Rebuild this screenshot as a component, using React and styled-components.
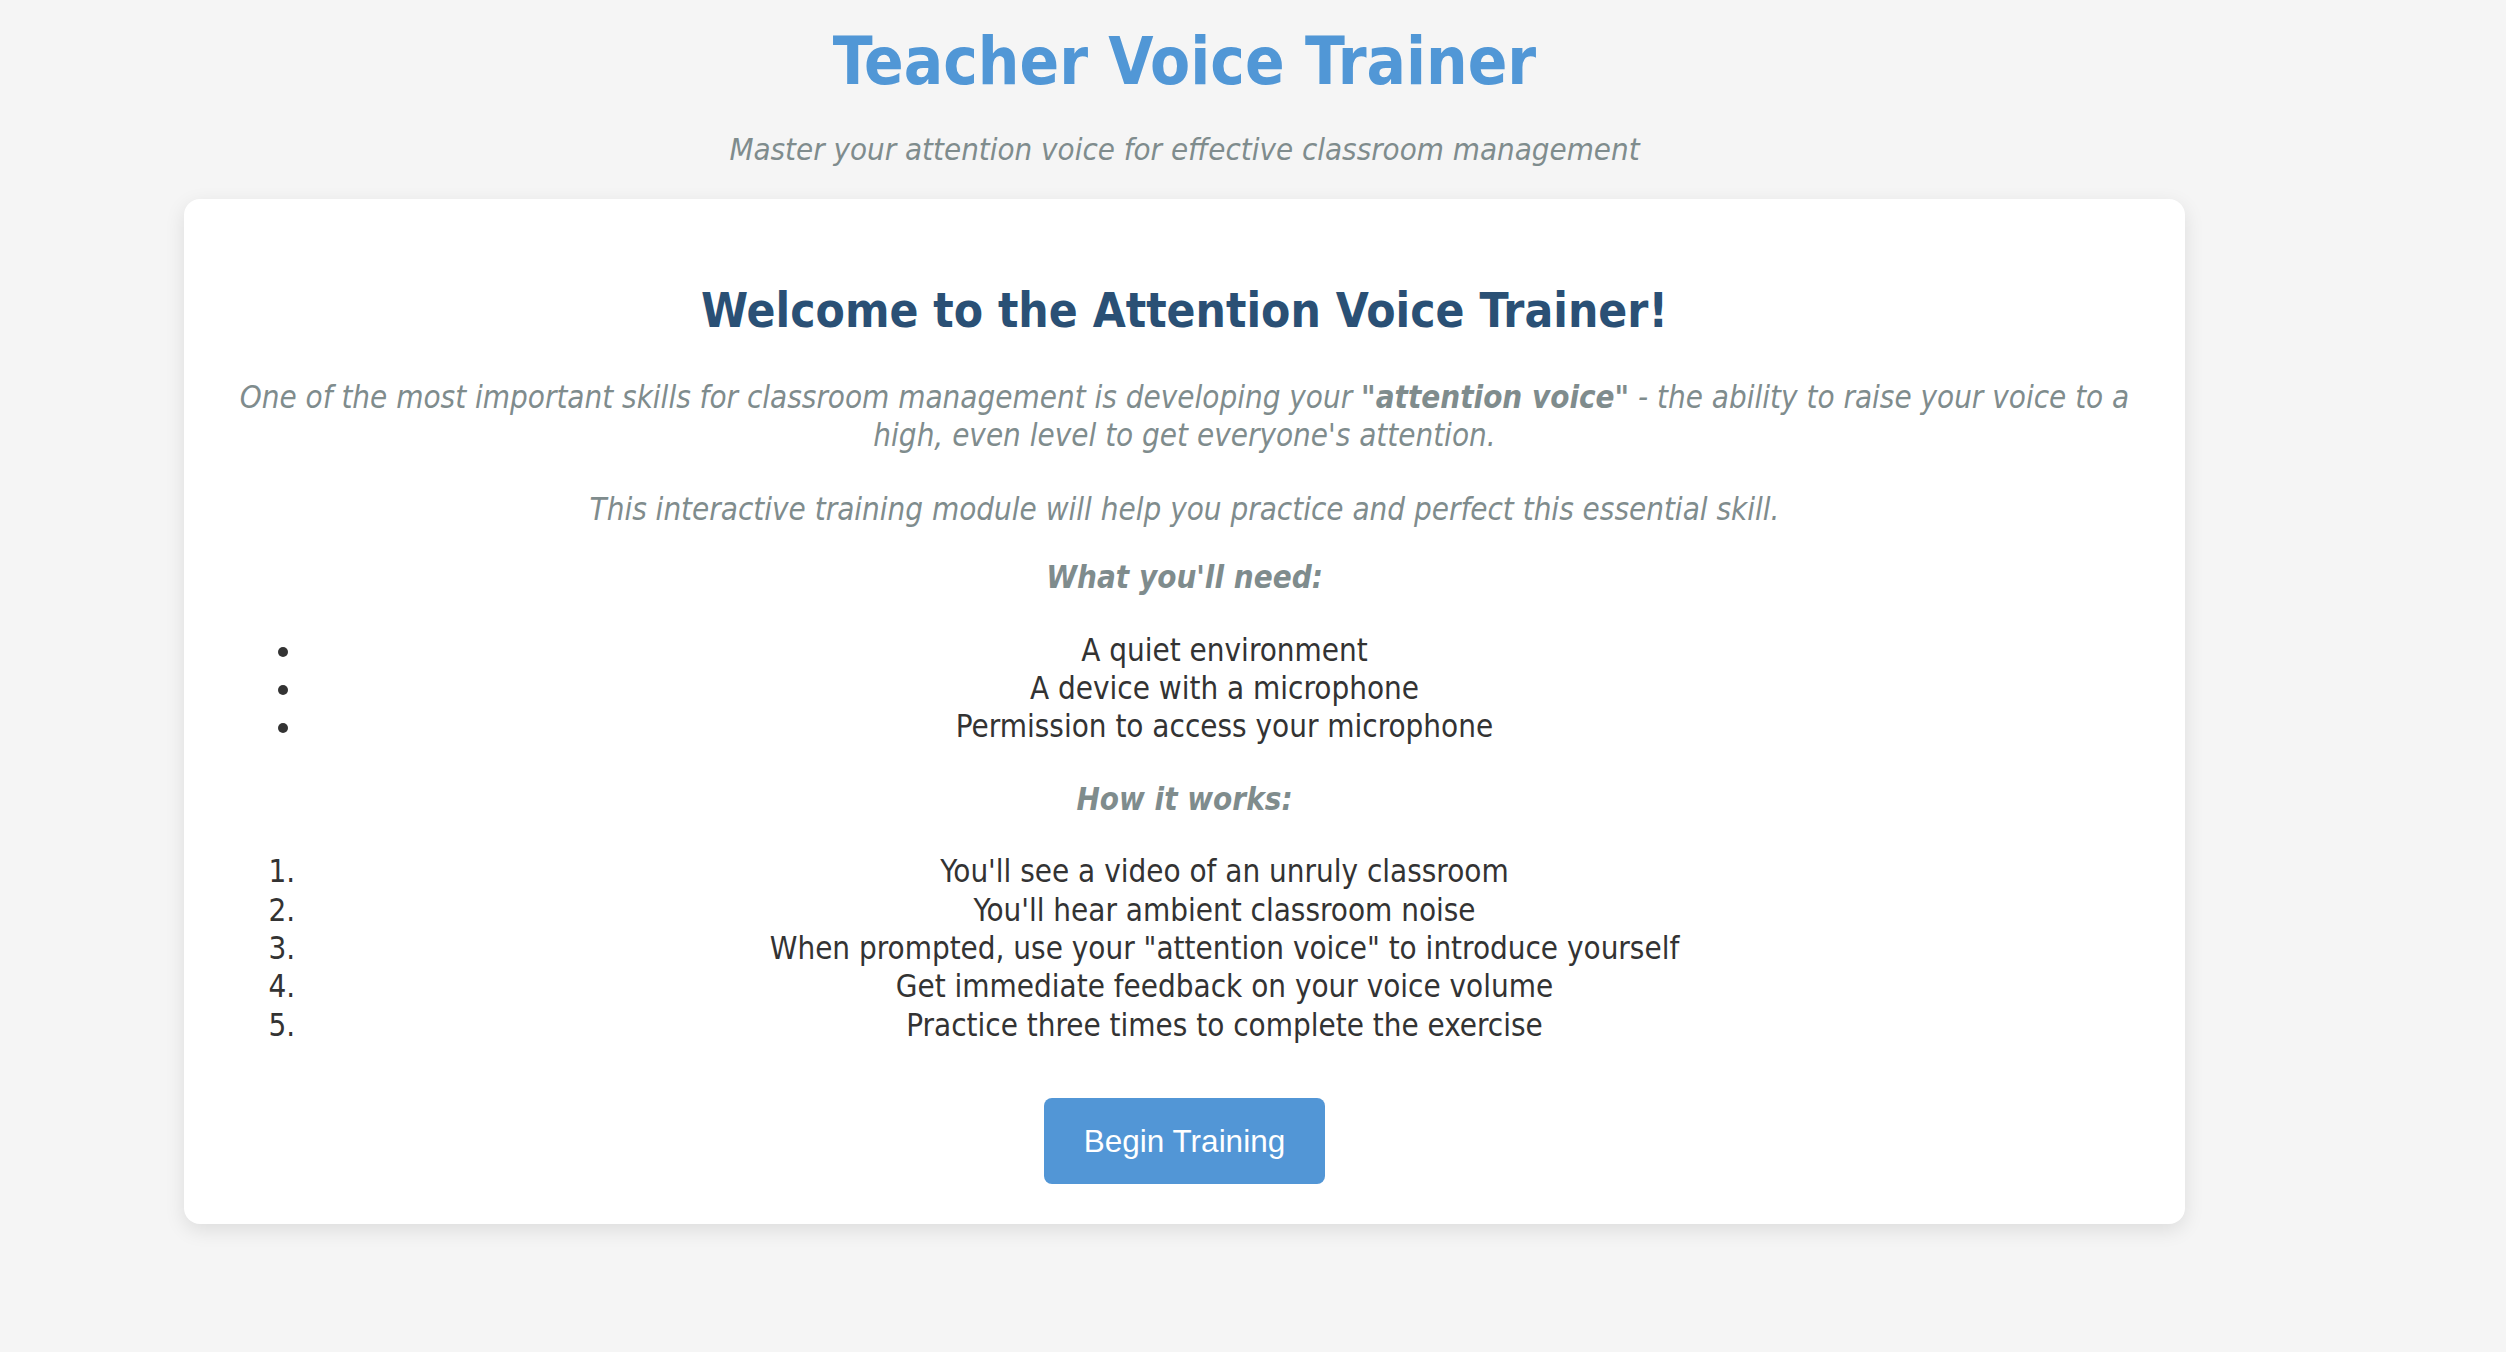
import React from "react";
import styled, { createGlobalStyle } from "styled-components";

const textFont = `"DejaVu Sans Condensed", "DejaVu Sans", Verdana, sans-serif`;

const GlobalStyle = createGlobalStyle`
  body {
    margin: 0;
    background-color: #f5f5f5;
    font-family: ${textFont};
    font-stretch: condensed;
    color: #333333;
  }
`;

const Container = styled.div`
  width: 2001px;
  margin: 0 0 0 184px;
  padding-bottom: 120px;
`;

const Header = styled.header`
  text-align: center;
`;

const Title = styled.h1`
  margin: 24px 0 0;
  font-size: 65px;
  font-weight: bold;
  color: #5197d6;
  line-height: normal;
`;

const Subtitle = styled.p`
  margin: 32px 0 32px;
  font-size: 31px;
  font-style: italic;
  color: #7f8c8d;
`;

const Card = styled.section`
  background-color: #ffffff;
  border-radius: 16px;
  padding: 40px;
  box-shadow: 0 6px 20px rgba(0, 0, 0, 0.1);
  text-align: center;
`;

const Heading = styled.h2`
  margin: 44px 0 40px;
  font-size: 47.5px;
  font-weight: bold;
  color: #2a5075;
`;

const Text = styled.p`
  margin: ${props => (props.lead ? "30px 0 35px" : "30px 0")};
  font-size: 31.1px;
  line-height: 38.4px;
  font-style: italic;
  font-weight: ${props => (props.bold ? "bold" : "normal")};
  color: #7f8c8d;

  strong {
    font-weight: bold;
  }
`;

const List = styled.ul`
  margin: 34px 0;
  padding-left: 80px;
  font-size: 31.1px;
  line-height: 38.4px;
  color: #333333;
`;

const NumberedList = styled(List).attrs({ as: "ol" })``;

const Actions = styled.div`
  margin-top: 54px;
`;

const Button = styled.button`
  padding: 24.5px 40px;
  border: none;
  border-radius: 8px;
  background-color: #5296d6;
  color: #ffffff;
  font-family: "Liberation Sans", Arial, sans-serif;
  font-size: 31.5px;
  cursor: pointer;
`;

const needs = [
  "A quiet environment",
  "A device with a microphone",
  "Permission to access your microphone"
];

const steps = [
  "You'll see a video of an unruly classroom",
  "You'll hear ambient classroom noise",
  "When prompted, use your \"attention voice\" to introduce yourself",
  "Get immediate feedback on your voice volume",
  "Practice three times to complete the exercise"
];

export default function App() {
  return (
    <>
      <GlobalStyle />
      <Container>
        <Header>
          <Title>Teacher Voice Trainer</Title>
          <Subtitle>
            Master your attention voice for effective classroom management
          </Subtitle>
        </Header>
        <Card>
          <Heading>Welcome to the Attention Voice Trainer!</Heading>
          <Text lead>
            One of the most important skills for classroom management is
            developing your <strong>"attention voice"</strong> - the ability to
            raise your voice to a high, even level to get everyone's attention.
          </Text>
          <Text>
            This interactive training module will help you practice and perfect
            this essential skill.
          </Text>
          <Text bold>What you'll need:</Text>
          <List>
            {needs.map(item => (
              <li key={item}>{item}</li>
            ))}
          </List>
          <Text bold>How it works:</Text>
          <NumberedList>
            {steps.map(item => (
              <li key={item}>{item}</li>
            ))}
          </NumberedList>
          <Actions>
            <Button>Begin Training</Button>
          </Actions>
        </Card>
      </Container>
    </>
  );
}
